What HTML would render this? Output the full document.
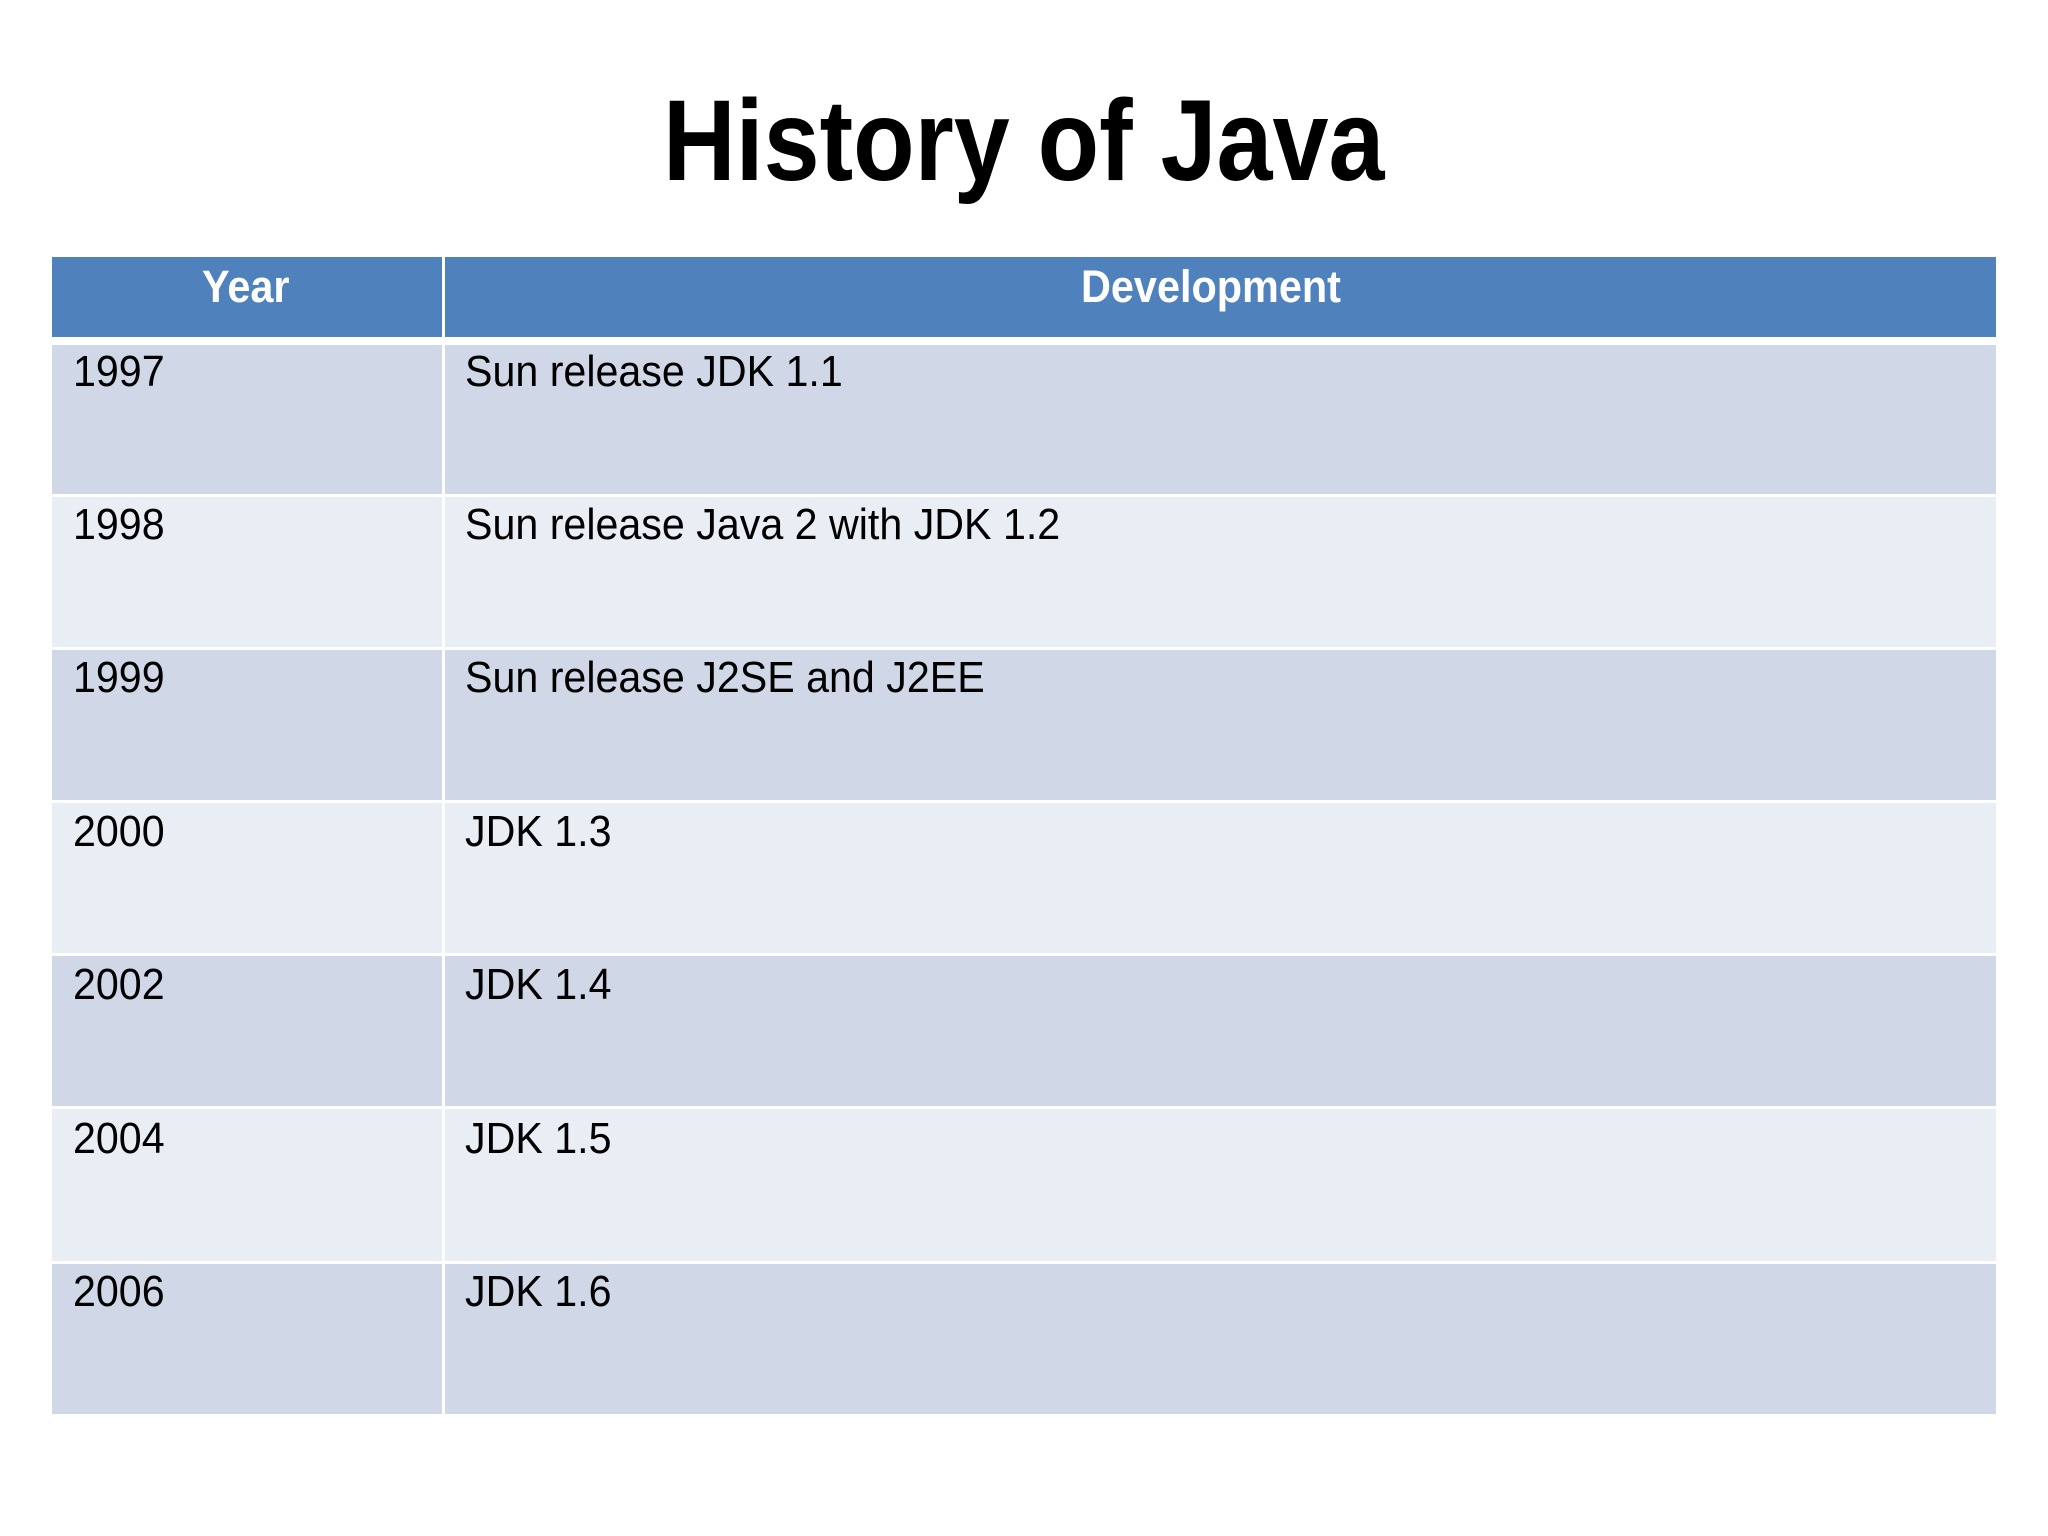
<!DOCTYPE html>
<html><head><meta charset="utf-8"><style>
html,body{margin:0;padding:0;background:#fff;}
body{width:2048px;height:1536px;position:relative;overflow:hidden;font-family:"Liberation Sans",sans-serif;}
.a{position:absolute;}
.t{position:absolute;white-space:nowrap;transform-origin:0 0;line-height:1;}
.title{font-weight:bold;font-size:115px;color:#000;left:663px;top:84px;transform:scaleX(0.875);}
.hd{background:#4F81BD;}
.o{background:#D0D8E8;}
.e{background:#E9EDF4;}
.h{font-weight:bold;font-size:45px;color:#fff;transform:scaleX(0.92);}
.c{font-size:44px;color:#000;transform:scaleX(0.936);}
</style></head><body>
<div class="t title">History of Java</div>

<div class="a hd" style="left:52px;top:257px;width:390px;height:80px"></div>
<div class="a hd" style="left:445px;top:257px;width:1551px;height:80px"></div>
<div class="t h" style="left:202px;top:264px">Year</div>
<div class="t h" style="left:1081px;top:264px">Development</div>

<div class="a o" style="left:52px;top:345px;width:390px;height:149px"></div>
<div class="a o" style="left:445px;top:345px;width:1551px;height:149px"></div>
<div class="a e" style="left:52px;top:497px;width:390px;height:150px"></div>
<div class="a e" style="left:445px;top:497px;width:1551px;height:150px"></div>
<div class="a o" style="left:52px;top:650px;width:390px;height:150px"></div>
<div class="a o" style="left:445px;top:650px;width:1551px;height:150px"></div>
<div class="a e" style="left:52px;top:803px;width:390px;height:150px"></div>
<div class="a e" style="left:445px;top:803px;width:1551px;height:150px"></div>
<div class="a o" style="left:52px;top:956px;width:390px;height:150px"></div>
<div class="a o" style="left:445px;top:956px;width:1551px;height:150px"></div>
<div class="a e" style="left:52px;top:1109px;width:390px;height:152px"></div>
<div class="a e" style="left:445px;top:1109px;width:1551px;height:152px"></div>
<div class="a o" style="left:52px;top:1264px;width:390px;height:150px"></div>
<div class="a o" style="left:445px;top:1264px;width:1551px;height:150px"></div>

<div class="t c" style="left:73px;top:350px">1997</div>
<div class="t c" style="left:465px;top:350px">Sun release JDK 1.1</div>
<div class="t c" style="left:73px;top:503px">1998</div>
<div class="t c" style="left:465px;top:503px">Sun release Java 2 with JDK 1.2</div>
<div class="t c" style="left:73px;top:656px">1999</div>
<div class="t c" style="left:465px;top:656px">Sun release J2SE and J2EE</div>
<div class="t c" style="left:73px;top:810px">2000</div>
<div class="t c" style="left:465px;top:810px">JDK 1.3</div>
<div class="t c" style="left:73px;top:963px">2002</div>
<div class="t c" style="left:465px;top:963px">JDK 1.4</div>
<div class="t c" style="left:73px;top:1117px">2004</div>
<div class="t c" style="left:465px;top:1117px">JDK 1.5</div>
<div class="t c" style="left:73px;top:1270px">2006</div>
<div class="t c" style="left:465px;top:1270px">JDK 1.6</div>
</body></html>
